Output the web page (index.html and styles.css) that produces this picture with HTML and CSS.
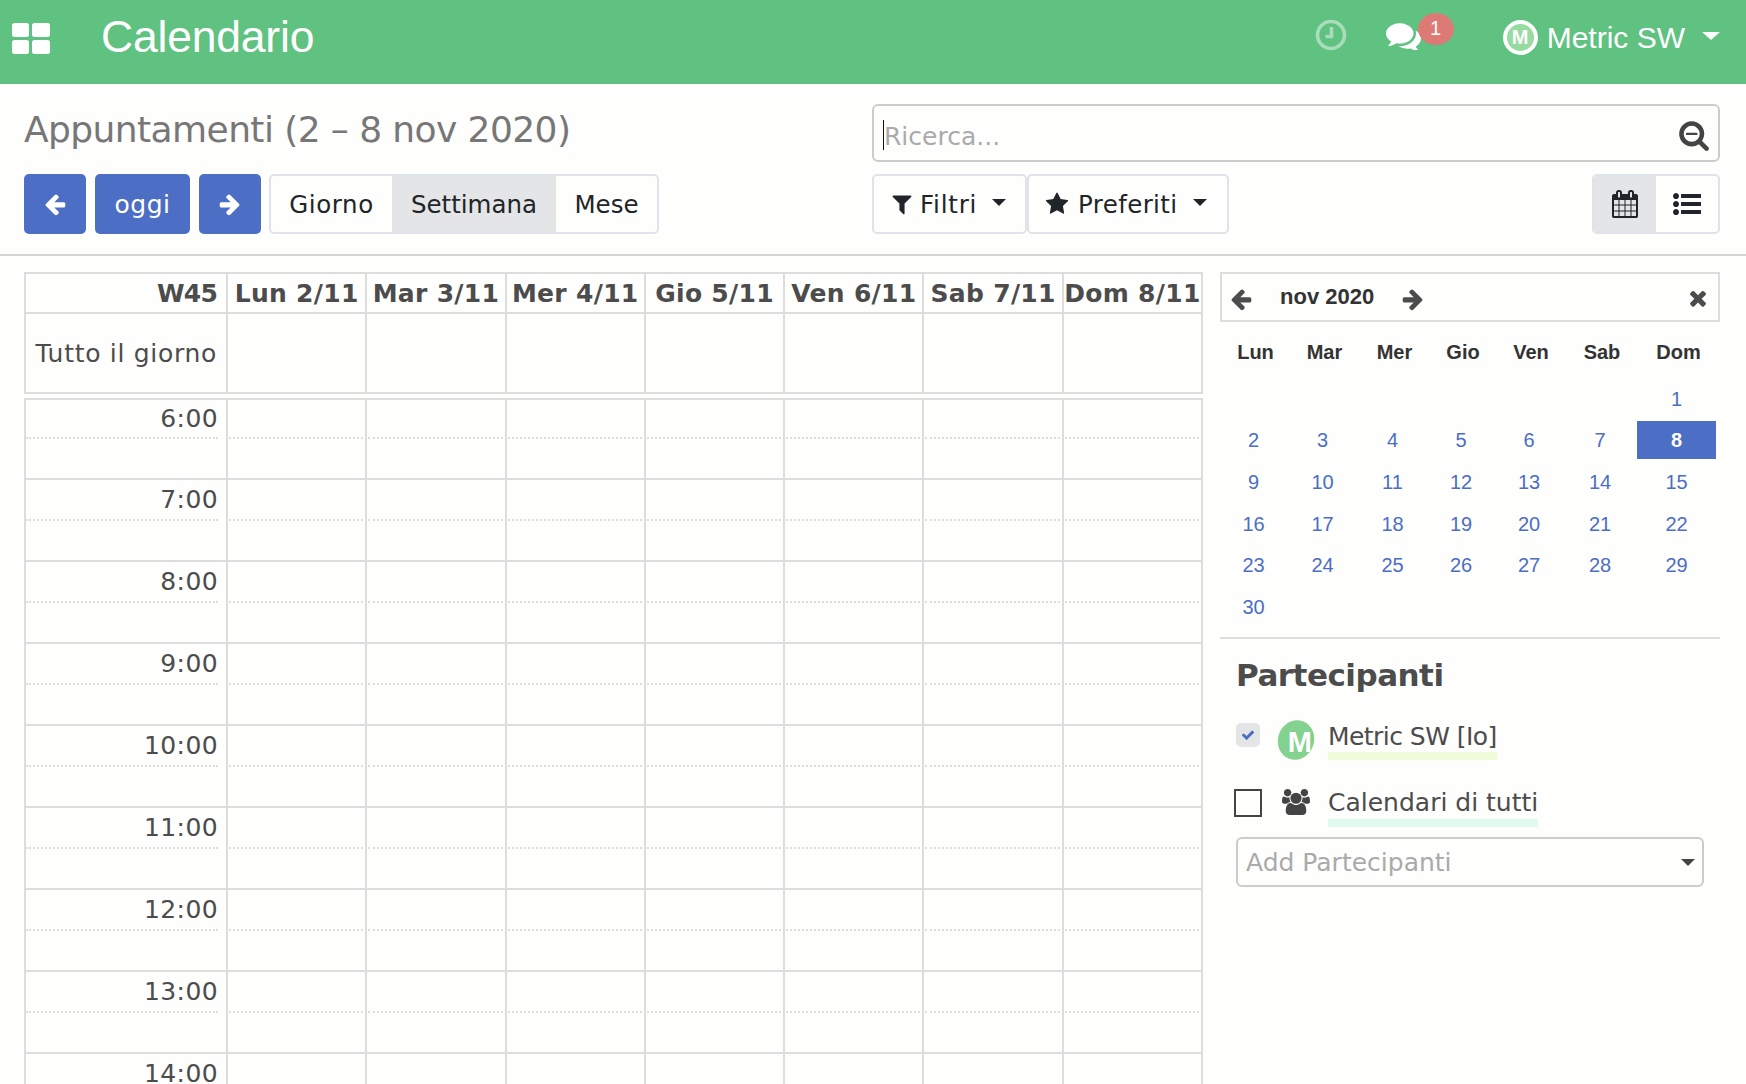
FILE: index.html
```html
<!DOCTYPE html>
<html lang="it">
<head>
<meta charset="utf-8">
<title>Calendario</title>
<link rel="stylesheet" href="styles.css">
</head>
<body>
<header class="topbar">
  <svg class="apps" viewBox="0 0 38 31"><rect x="0" y="0" width="17" height="14" rx="2.5"/><rect x="20" y="0" width="18" height="14" rx="2.5"/><rect x="0" y="17" width="17" height="14" rx="2.5"/><rect x="20" y="17" width="18" height="14" rx="2.5"/></svg>
  <div class="brand">Calendario</div>
  <svg class="clock" viewBox="0 0 32 32"><circle cx="16" cy="16" r="13.5"/><path d="M16.5 8v9.5h-6"/></svg>
  <div class="chat">
    <svg class="chat-icon" viewBox="0 190 1792 1410" preserveAspectRatio="none"><path d="M1408 768q0 139-94 257t-256.5 186.5-353.5 68.5q-86 0-176-16-124 88-278 128-36 9-86 16h-3q-11 0-20.5-8t-11.5-21q-1-3-1-6.5t.5-6.5 2-6l2.5-5 3.5-5.5 4-5 4.5-5 4-4.5q5-6 23-25t26-29.5 22.5-29 25-38.5 20.5-44q-124-72-195-177t-71-224q0-139 94-257t256.5-186.5 353.5-68.5 353.5 68.5 256.5 186.5 94 257zm384 256q0 120-71 224.5t-195 176.5q10 24 20.5 44t25 38.5 22.5 29 26 29.5 23 25q1 1 4 4.5t4.5 5 4 5 3.5 5.5l2.5 5 2 6 .5 6.5-1 6.5q-3 14-13 22t-22 7q-50-7-86-16-154-40-278-128-90 16-176 16-271 0-472-132 58 4 88 4 161 0 309-45t264-129q125-92 192-212t67-254q0-77-23-152 129 71 204 178t75 230z"/></svg>
    <span class="badge">1</span>
  </div>
  <div class="avatar-top"><span>M</span></div>
  <div class="user">Metric SW</div>
  <span class="caret caret-top"></span>
</header>

<section class="panel">
  <h1 class="title">Appuntamenti (2 – 8 nov 2020)</h1>
  <div class="search">
    <input class="search-input" type="text" placeholder="Ricerca...">
    <span class="cursor"></span>
    <svg class="search-icon" viewBox="0 0 1792 1792"><path d="M1088 800v64q0 13-9.5 22.5t-22.5 9.5h-576q-13 0-22.5-9.5t-9.5-22.5v-64q0-13 9.5-22.5t22.5-9.5h576q13 0 22.5 9.5t9.5 22.5zm128 32q0-185-131.5-316.5t-316.5-131.5-316.5 131.5-131.5 316.5 131.5 316.5 316.5 131.5 316.5-131.5 131.5-316.5zm512 832q0 53-37.5 90.5t-90.5 37.5q-54 0-90-38l-343-342q-179 124-399 124-143 0-273.5-55.5t-225-150-150-225-55.5-273.5 55.5-273.5 150-225 225-150 273.5-55.5 273.5 55.5 225 150 150 225 55.5 273.5q0 220-124 399l343 343q37 37 37 90z"/></svg>
  </div>
  <div class="toolbar">
    <button class="btn primary arrow" type="button"><svg viewBox="0 0 1792 1792"><path d="M1664 896v128q0 53-32.5 90.5t-84.5 37.5h-704l293 294q38 36 38 90t-38 90l-75 76q-37 37-90 37-52 0-91-37l-651-652q-37-37-37-90 0-52 37-91l651-650q38-38 91-38 52 0 90 38l75 74q38 38 38 91t-38 91l-293 293h704q52 0 84.5 37.5t32.5 90.5z"/></svg></button>
    <button class="btn primary today" type="button">oggi</button>
    <button class="btn primary arrow" type="button"><svg viewBox="0 0 1792 1792"><path d="M1600 960q0 54-37 91l-651 651q-39 37-91 37-51 0-90-37l-75-75q-38-38-38-91t38-91l293-293h-704q-52 0-84.5-37.5t-32.5-90.5v-128q0-53 32.5-90.5t84.5-37.5h704l-293-294q-38-36-38-90t38-90l75-75q38-38 90-38 53 0 91 38l651 651q37 35 37 90z"/></svg></button>
    <div class="group">
      <button class="seg seg-day" type="button">Giorno</button>
      <button class="seg seg-week active" type="button">Settimana</button>
      <button class="seg seg-month" type="button">Mese</button>
    </div>
  </div>
  <div class="toolbar toolbar-right">
    <button class="drop drop-filter" type="button">
      <svg class="drop-icon" viewBox="0 0 1792 1792"><path d="M1595 295q17 41-14 70l-493 493v742q0 42-39 59-13 5-25 5-27 0-45-19l-256-256q-19-19-19-45v-486l-493-493q-31-29-14-70 17-39 59-39h1280q42 0 59 39z"/></svg>
      <span>Filtri</span><span class="caret"></span>
    </button>
    <button class="drop drop-fav" type="button">
      <svg class="drop-icon" viewBox="0 0 1792 1792"><path d="M1728 647q0 22-26 48l-363 354 86 500q1 7 1 20 0 21-10.5 35.5t-30.5 14.5q-19 0-40-12l-449-236-449 236q-22 12-40 12-21 0-31.5-14.5t-10.5-35.5q0-6 2-20l86-500-364-354q-25-27-25-48 0-37 56-46l502-73 225-455q19-41 49-41t49 41l225 455 502 73q56 9 56 46z"/></svg>
      <span>Preferiti</span><span class="caret"></span>
    </button>
    <div class="views">
      <button class="view active" type="button"><svg viewBox="0 0 1792 1792"><path d="M192 1664h288v-288h-288v288zm352 0h320v-288h-320v288zm-352-352h288v-320h-288v320zm352 0h320v-320h-320v320zm-352-384h288v-288h-288v288zm736 736h320v-288h-320v288zm-384-736h320v-288h-320v288zm768 736h288v-288h-288v288zm-384-352h320v-320h-320v320zm-352-864v-288q0-13-9.5-22.5t-22.5-9.5h-64q-13 0-22.5 9.5t-9.5 22.5v288q0 13 9.5 22.5t22.5 9.5h64q13 0 22.5-9.5t9.5-22.5zm736 864h288v-320h-288v320zm-384-384h320v-288h-320v288zm384 0h288v-288h-288v288zm32-480v-288q0-13-9.5-22.5t-22.5-9.5h-64q-13 0-22.5 9.5t-9.5 22.5v288q0 13 9.5 22.5t22.5 9.5h64q13 0 22.5-9.5t9.5-22.5zm384-64v1280q0 52-38 90t-90 38h-1408q-52 0-90-38t-38-90v-1280q0-52 38-90t90-38h128v-96q0-66 47-113t113-47h64q66 0 113 47t47 113v96h384v-96q0-66 47-113t113-47h64q66 0 113 47t47 113v96h128q52 0 90 38t38 90z"/></svg></button>
      <button class="view" type="button"><svg viewBox="0 0 1792 1792"><path d="M384 1408q0 80-56 136t-136 56-136-56-56-136 56-136 136-56 136 56 56 136zm0-512q0 80-56 136t-136 56-136-56-56-136 56-136 136-56 136 56 56 136zm1408 416v192q0 13-9.5 22.5t-22.5 9.5h-1216q-13 0-22.5-9.5t-9.5-22.5v-192q0-13 9.5-22.5t22.5-9.5h1216q13 0 22.5 9.5t9.5 22.5zm-1408-928q0 80-56 136t-136 56-136-56-56-136 56-136 136-56 136 56 56 136zm1408 416v192q0 13-9.5 22.5t-22.5 9.5h-1216q-13 0-22.5-9.5t-9.5-22.5v-192q0-13 9.5-22.5t22.5-9.5h1216q13 0 22.5 9.5t9.5 22.5zm0-512v192q0 13-9.5 22.5t-22.5 9.5h-1216q-13 0-22.5-9.5t-9.5-22.5v-192q0-13 9.5-22.5t22.5-9.5h1216q13 0 22.5 9.5t9.5 22.5z"/></svg></button>
    </div>
  </div>
</section>

<main class="content">
  <div class="week">
    <div class="row head">
      <div class="cell label">W45</div><div class="cell">Lun 2/11</div><div class="cell">Mar 3/11</div><div class="cell">Mer 4/11</div><div class="cell">Gio 5/11</div><div class="cell">Ven 6/11</div><div class="cell">Sab 7/11</div><div class="cell">Dom 8/11</div>
    </div>
    <div class="row allday">
      <div class="cell label">Tutto il giorno</div><div class="cell"></div><div class="cell"></div><div class="cell"></div><div class="cell"></div><div class="cell"></div><div class="cell"></div><div class="cell"></div>
    </div>
    <div class="row hour first">
      <div class="cell label"><div class="half">6:00</div></div><div class="cell"><div class="half"></div></div><div class="cell"><div class="half"></div></div><div class="cell"><div class="half"></div></div><div class="cell"><div class="half"></div></div><div class="cell"><div class="half"></div></div><div class="cell"><div class="half"></div></div><div class="cell"><div class="half"></div></div>
    </div>
    <div class="row hour">
      <div class="cell label"><div class="half">7:00</div></div><div class="cell"><div class="half"></div></div><div class="cell"><div class="half"></div></div><div class="cell"><div class="half"></div></div><div class="cell"><div class="half"></div></div><div class="cell"><div class="half"></div></div><div class="cell"><div class="half"></div></div><div class="cell"><div class="half"></div></div>
    </div>
    <div class="row hour">
      <div class="cell label"><div class="half">8:00</div></div><div class="cell"><div class="half"></div></div><div class="cell"><div class="half"></div></div><div class="cell"><div class="half"></div></div><div class="cell"><div class="half"></div></div><div class="cell"><div class="half"></div></div><div class="cell"><div class="half"></div></div><div class="cell"><div class="half"></div></div>
    </div>
    <div class="row hour">
      <div class="cell label"><div class="half">9:00</div></div><div class="cell"><div class="half"></div></div><div class="cell"><div class="half"></div></div><div class="cell"><div class="half"></div></div><div class="cell"><div class="half"></div></div><div class="cell"><div class="half"></div></div><div class="cell"><div class="half"></div></div><div class="cell"><div class="half"></div></div>
    </div>
    <div class="row hour">
      <div class="cell label"><div class="half">10:00</div></div><div class="cell"><div class="half"></div></div><div class="cell"><div class="half"></div></div><div class="cell"><div class="half"></div></div><div class="cell"><div class="half"></div></div><div class="cell"><div class="half"></div></div><div class="cell"><div class="half"></div></div><div class="cell"><div class="half"></div></div>
    </div>
    <div class="row hour">
      <div class="cell label"><div class="half">11:00</div></div><div class="cell"><div class="half"></div></div><div class="cell"><div class="half"></div></div><div class="cell"><div class="half"></div></div><div class="cell"><div class="half"></div></div><div class="cell"><div class="half"></div></div><div class="cell"><div class="half"></div></div><div class="cell"><div class="half"></div></div>
    </div>
    <div class="row hour">
      <div class="cell label"><div class="half">12:00</div></div><div class="cell"><div class="half"></div></div><div class="cell"><div class="half"></div></div><div class="cell"><div class="half"></div></div><div class="cell"><div class="half"></div></div><div class="cell"><div class="half"></div></div><div class="cell"><div class="half"></div></div><div class="cell"><div class="half"></div></div>
    </div>
    <div class="row hour">
      <div class="cell label"><div class="half">13:00</div></div><div class="cell"><div class="half"></div></div><div class="cell"><div class="half"></div></div><div class="cell"><div class="half"></div></div><div class="cell"><div class="half"></div></div><div class="cell"><div class="half"></div></div><div class="cell"><div class="half"></div></div><div class="cell"><div class="half"></div></div>
    </div>
    <div class="row hour">
      <div class="cell label"><div class="half">14:00</div></div><div class="cell"><div class="half"></div></div><div class="cell"><div class="half"></div></div><div class="cell"><div class="half"></div></div><div class="cell"><div class="half"></div></div><div class="cell"><div class="half"></div></div><div class="cell"><div class="half"></div></div><div class="cell"><div class="half"></div></div>
    </div>
  </div>

  <aside class="side">
    <div class="mini-head">
      <svg class="mini-arrow" viewBox="0 0 1792 1792"><path d="M1664 896v128q0 53-32.5 90.5t-84.5 37.5h-704l293 294q38 36 38 90t-38 90l-75 76q-37 37-90 37-52 0-91-37l-651-652q-37-37-37-90 0-52 37-91l651-650q38-38 91-38 52 0 90 38l75 74q38 38 38 91t-38 91l-293 293h704q52 0 84.5 37.5t32.5 90.5z"/></svg>
      <span class="mini-title">nov 2020</span>
      <svg class="mini-arrow" viewBox="0 0 1792 1792"><path d="M1600 960q0 54-37 91l-651 651q-39 37-91 37-51 0-90-37l-75-75q-38-38-38-91t38-91l293-293h-704q-52 0-84.5-37.5t-32.5-90.5v-128q0-53 32.5-90.5t84.5-37.5h704l-293-294q-38-36-38-90t38-90l75-75q38-38 90-38 53 0 91 38l651 651q37 35 37 90z"/></svg>
      <svg class="mini-close" viewBox="0 0 1792 1792"><path d="M1490 1322q0 40-28 68l-136 136q-28 28-68 28t-68-28l-294-294-294 294q-28 28-68 28t-68-28l-136-136q-28-28-28-68t28-68l294-294-294-294q-28-28-28-68t28-68l136-136q28-28 68-28t68 28l294 294 294-294q28-28 68-28t68 28l136 136q28 28 28 68t-28 68l-294 294 294 294q28 28 28 68z"/></svg>
    </div>
    <div class="mini-grid">
      <div class="wd">Lun</div><div class="wd">Mar</div><div class="wd">Mer</div><div class="wd">Gio</div><div class="wd">Ven</div><div class="wd">Sab</div><div class="wd">Dom</div>
      <div class="d"></div><div class="d"></div><div class="d"></div><div class="d"></div><div class="d"></div><div class="d"></div><div class="d">1</div>
      <div class="d">2</div><div class="d">3</div><div class="d">4</div><div class="d">5</div><div class="d">6</div><div class="d">7</div><div class="d sel"><span>8</span></div>
      <div class="d">9</div><div class="d">10</div><div class="d">11</div><div class="d">12</div><div class="d">13</div><div class="d">14</div><div class="d">15</div>
      <div class="d">16</div><div class="d">17</div><div class="d">18</div><div class="d">19</div><div class="d">20</div><div class="d">21</div><div class="d">22</div>
      <div class="d">23</div><div class="d">24</div><div class="d">25</div><div class="d">26</div><div class="d">27</div><div class="d">28</div><div class="d">29</div>
      <div class="d">30</div>
    </div>
    <div class="people">
      <h2 class="people-title">Partecipanti</h2>
      <div class="person me">
        <span class="check on"><svg viewBox="0 0 1792 1792"><path d="M1671 566q0 40-28 68l-724 724-136 136q-28 28-68 28t-68-28l-136-136-362-362q-28-28-28-68t28-68l136-136q28-28 68-28t68 28l294 295 656-657q28-28 68-28t68 28l136 136q28 28 28 68z"/></svg></span>
        <span class="avatar-side"><span class="avatar-m">M</span></span>
        <span class="pname mark-me">Metric SW [Io]</span>
      </div>
      <div class="person all">
        <span class="check"></span>
        <svg class="users" viewBox="0 0 1920 1792"><path d="M593 896q-162 5-265 128h-134q-82 0-138-40.5t-56-118.5q0-353 124-353 6 0 43.5 21t97.5 42.5 119 21.5q67 0 133-23-5 37-5 66 0 139 81 256zm1071 637q0 120-73 189.5t-194 69.5h-874q-121 0-194-69.5t-73-189.5q0-53 3.5-103.5t14-109 26.5-108.5 43-97.5 62-81 85.5-53.5 111.5-20q10 0 43 21.5t73 48 107 48 135 21.5 135-21.5 107-48 73-48 43-21.5q61 0 111.5 20t85.5 53.5 62 81 43 97.5 26.5 108.5 14 109 3.5 103.5zm-1024-1277q0 106-75 181t-181 75-181-75-75-181 75-181 181-75 181 75 75 181zm704 384q0 159-112.5 271.5t-271.5 112.5-271.5-112.5-112.5-271.5 112.5-271.5 271.5-112.5 271.5 112.5 112.5 271.5zm576 225q0 78-56 118.5t-138 40.5h-134q-103-123-265-128 81-117 81-256 0-29-5-66 66 23 133 23 59 0 119-21.5t97.5-42.5 43.5-21q124 0 124 353zm-128-609q0 106-75 181t-181 75-181-75-75-181 75-181 181-75 181 75 75 181z"/></svg>
        <span class="pname mark-all">Calendari di tutti</span>
      </div>
      <div class="add">
        <span>Add Partecipanti</span>
        <span class="caret caret-add"></span>
      </div>
    </div>
  </aside>
</main>
</body>
</html>
```
FILE: styles.css
```css
* { box-sizing: border-box; }
html, body { margin: 0; height: 100%; }
body {
  height: 1084px;
  overflow: hidden;
  background: #fefefd;
  color: #4c4c4c;
  font-family: "DejaVu Sans", sans-serif;
  font-size: 25px;
}
svg { display: block; fill: currentColor; }
button { font: inherit; margin: 0; padding: 0; cursor: pointer; }

.caret {
  display: inline-block;
  flex: none;
  width: 0; height: 0;
  border-left: 7px solid transparent;
  border-right: 7px solid transparent;
  border-top: 7px solid currentColor;
}

/* top bar */
.topbar {
  height: 84px;
  background: #5fc280;
  color: #fff;
  display: flex;
  align-items: center;
  padding-left: 12px;
  font-family: "Liberation Sans", sans-serif;
}
.apps { width: 38px; height: 31px; margin-top: -8px; }
.brand { font-size: 44.5px; margin-left: 51px; margin-right: auto; margin-top: -11px; letter-spacing: -.2px; }
.clock { width: 32px; height: 32px; margin-top: -15px; fill: none; stroke: #fff; stroke-width: 3.6; opacity: .45; }
.chat { position: relative; width: 35px; height: 28px; margin-left: 39px; margin-top: -12px; }
.chat-icon { width: 35px; height: 28px; }
.badge {
  position: absolute; left: 32px; top: -9px;
  width: 36px; height: 32px;
  border-radius: 50%;
  background: #de7a76;
  text-align: center;
  font-size: 20px; line-height: 30px;
}
.avatar-top {
  width: 35px; height: 35px; margin-left: 82px; margin-top: -10px;
  border-radius: 50%;
  background: #97dba0;
  border: 4px solid #fff;
  display: flex; align-items: center; justify-content: center;
  font-size: 20px; font-weight: 700;
}
.user { font-size: 30px; margin-left: 9px; margin-top: -8px; }
.caret-top {
  margin-left: 17px; margin-right: 26px; margin-top: -13px;
  border-left-width: 9px; border-right-width: 9px; border-top-width: 8px;
}

/* control panel */
.panel {
  display: grid;
  grid-template-columns: 848px 848px;
  grid-template-rows: 58px 60px;
  row-gap: 12px;
  padding: 20px 0 20px 24px;
  height: 172px;
  border-bottom: 2px solid #d4d4d4;
}
.title {
  margin: 0;
  font-size: 36px;
  font-weight: 400;
  color: #777;
  line-height: 52px;
  letter-spacing: -.58px;
}
.search { position: relative; }
.search-input {
  display: block;
  width: 100%; height: 58px;
  border: 2px solid #ccc;
  border-radius: 6px;
  background: transparent;
  padding: 7px 0 0 10px;
  font: inherit;
  outline: none;
}
.search-input::placeholder { color: #aaa; opacity: 1; }
.cursor { position: absolute; left: 11px; top: 16px; width: 1px; height: 30px; background: #111; }
.search-icon { position: absolute; right: 10px; top: 15px; width: 32px; height: 32px; color: #444; }

.toolbar { display: flex; align-items: stretch; }
.btn { border: 0; border-radius: 5px; color: #fff; display: flex; align-items: center; justify-content: center; }
.primary { background: #4c6ec4; }
.arrow { width: 62px; }
.arrow svg { width: 24px; height: 24px; }
.today { width: 95px; margin: 0 9px; letter-spacing: .5px; }
.group {
  display: flex;
  margin-left: 8px;
  border: 2px solid #e0e3e8;
  border-radius: 5px;
  overflow: hidden;
}
.seg { border: 0; background: transparent; color: #212529; font-size: 24.5px; }
.seg-day { width: 121px; letter-spacing: .6px; }
.seg-week { width: 164px; }
.seg-month { width: 101px; }
.seg.active { background: #e4e5e6; }

.drop {
  flex: none;
  display: flex; align-items: center;
  background: transparent;
  border: 2px solid #e0e3e8;
  border-radius: 5px;
  color: #212529;
  font-size: 24.5px;
  letter-spacing: .4px;
}
.drop-filter { width: 155px; padding-left: 16px; letter-spacing: .8px; }
.drop-fav { width: 202px; padding-left: 16px; }
.drop-icon { flex: none; width: 24px; height: 24px; margin-right: 6px; }
.drop-fav .drop-icon { margin-right: 9px; }
.drop .caret { margin-left: 15px; margin-top: -3px; }
.views {
  display: flex;
  margin-left: auto;
  width: 128px;
  flex: none;
  border: 2px solid #e0e3e8;
  border-radius: 5px;
  overflow: hidden;
}
.view {
  width: 62px; border: 0; background: transparent; color: #212529;
  display: flex; align-items: center; justify-content: center;
}
.view.active { background: #e4e5e6; }
.view svg { width: 28px; height: 28px; }

/* week grid */
.content { display: flex; padding: 16px 0 0 24px; align-items: flex-start; }
.week { width: 1181px; flex: none; }
.row { display: grid; grid-template-columns: 202px repeat(7, 139.3px); border-left: 2px solid #ddd; width: 1179px; }
.cell { border-right: 2px solid #ddd; white-space: nowrap; }
.cell.label { text-align: right; padding-right: 8px; }
.head { border-top: 2px solid #ddd; }
.head .cell { height: 40px; font-weight: 700; line-height: 40px; text-align: center; border-bottom: 2px solid #ddd; letter-spacing: .3px; }
.head .cell.label { text-align: right; padding-right: 9px; letter-spacing: -.8px; }
.allday { margin-bottom: 4px; }
.allday .cell { height: 80px; line-height: 80px; border-bottom: 2px solid #ddd; }
.allday .cell.label { letter-spacing: .7px; padding-right: 9px; }
.hour { border-top: 2px solid #ddd; }
.hour .cell { height: 80px; padding: 0 2px 0 1px; }
.hour .cell.label { padding: 0 8px 0 0; letter-spacing: .4px; }
.half { height: 41px; line-height: 40px; border-bottom: 2px dotted #ddd; }
.first .cell { height: 78px; }
.first .half { height: 39px; line-height: 37px; }

/* sidebar */
.side { width: 500px; margin-left: 15px; flex: none; font-family: "Liberation Sans", sans-serif; }
.mini-head {
  height: 50px;
  border: 2px solid #ddd;
  display: flex; align-items: center;
  padding-left: 7px;
  color: #4c4c4c;
}
.mini-arrow { flex: none; width: 24px; height: 24px; margin-top: 3px; }
.mini-title { font-size: 22px; font-weight: 700; color: #333; margin: 0 27px; white-space: nowrap; }
.mini-close { flex: none; width: 24px; height: 24px; margin-left: auto; margin-right: 8px; margin-top: 1px; }
.mini-grid {
  display: grid;
  grid-template-columns: 67px 71px 69px 68px 68px 74px 79px;
  grid-template-rows: 47.5px;
  grid-auto-rows: 41.7px;
  width: 496px;
  padding-top: 9px;
  height: 315px;
  text-align: center;
}
.wd { font-size: 20px; font-weight: 700; color: #333; line-height: 43px; padding-left: 4px; }
.d { font-size: 20px; color: #4c6ec4; line-height: 41px; }
.sel { padding: 1px 0; line-height: 38px; }
.sel span { display: block; height: 38px; background: #4c6ec4; color: #fff; font-weight: 700; }

.people { border-top: 2px solid #ddd; padding-left: 16px; }
.people-title { margin: 0; font-size: 31px; letter-spacing: -.5px; font-weight: 700; color: #4c4c4c; font-family: "DejaVu Sans", sans-serif; line-height: 36px; padding-top: 18px; height: 79px; }
.person { display: flex; align-items: center; font-family: "DejaVu Sans", sans-serif; }
.me { height: 40px; }
.all { height: 40px; margin-top: 26px; }
.check { flex: none; width: 24px; height: 24px; border-radius: 5px; background: #e4e5e6; display: flex; align-items: center; justify-content: center; color: #4c6ec4; }
.check.on { margin-right: 18px; margin-top: -7px; }
.check.on svg { width: 14px; height: 14px; }
.all .check { width: 28px; height: 28px; margin: -2px 20px 0 -2px; border-radius: 0; background: transparent; border: 2px solid #444; }
.avatar-side {
  flex: none; width: 36px; height: 40px; border-radius: 50%;
  background: #84d28f;
  transform: rotate(20deg);
  display: flex; align-items: center; justify-content: center;
  margin: 3px 14px 0 0;
}
.avatar-m { transform: rotate(-20deg) translate(4px, 2px); color: #fff; font: 700 29px "Liberation Sans", sans-serif; }
.users { flex: none; width: 28px; height: 28px; color: #444; margin-right: 18px; margin-top: -4px; }
.pname { display: block; height: 44px; border-bottom: 8px solid; }
.mark-me { border-bottom-color: #eefcd9; letter-spacing: -.55px; margin-top: 0; line-height: 41px; }
.mark-all { border-bottom-color: #e0faef; margin-top: 1px; line-height: 40px; }
.add {
  display: flex; align-items: center; justify-content: space-between;
  width: 468px; height: 50px;
  margin-top: 13px;
  border: 2px solid #ccc;
  border-radius: 6px;
  padding: 1px 7px 0 8px;
  color: #aaa;
  font-family: "DejaVu Sans", sans-serif;
}
.caret-add { color: #444; }
```
